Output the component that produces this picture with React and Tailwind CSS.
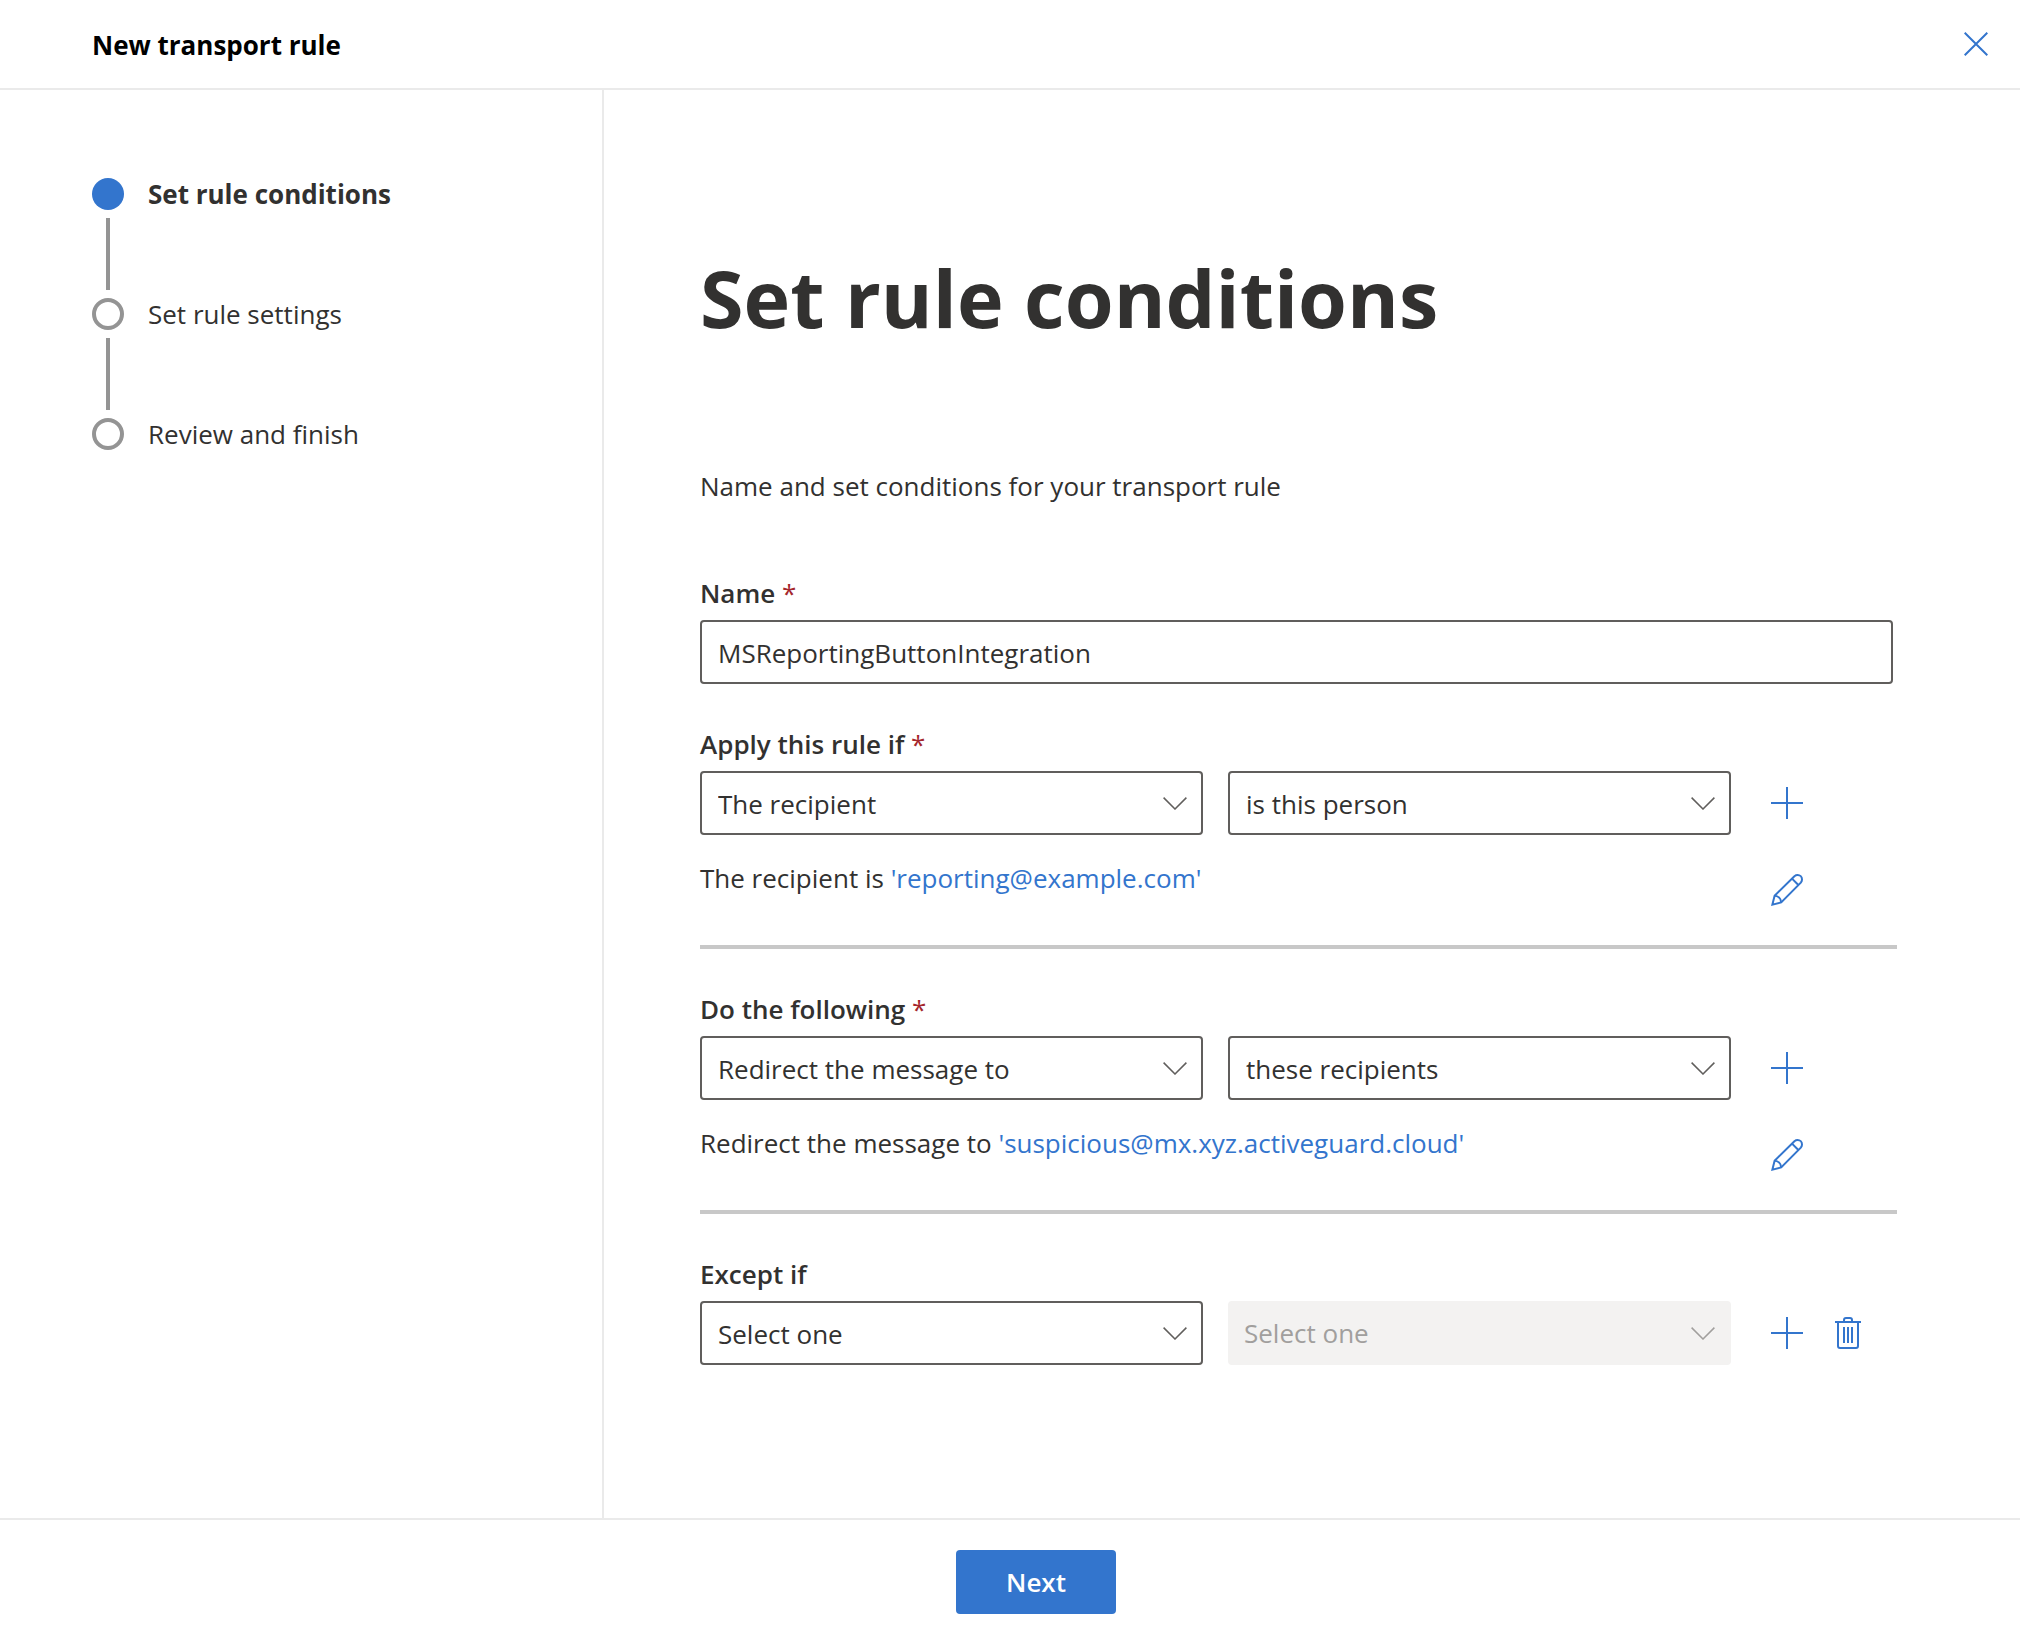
import React from "react";

const steps = [
  { label: "Set rule conditions", current: true },
  { label: "Set rule settings" },
  { label: "Review and finish" },
];

function PlusIcon() {
  return (
    <svg viewBox="0 0 32 32" className="size-8" fill="none" stroke="currentColor" strokeWidth="2" aria-hidden="true">
      <path d="M16 0v32M0 16h32" />
    </svg>
  );
}

function PencilIcon() {
  return (
    <svg viewBox="0 0 32 32" className="size-8" fill="none" stroke="currentColor" strokeWidth="2" aria-hidden="true">
      <path d="M1.4 30.6 3.6 21.8 23.4 2.2C24.4 1.4 25.4 1 26.6 1 29 1 31 3 31 5.4 31 6.6 30.6 7.6 29.8 8.6L10.2 28.4Z" />
      <path d="M21 4.600 27.400 11M3.600 21.800C7.200 22 10 24.800 10.200 28.400" />
    </svg>
  );
}

function TrashIcon() {
  return (
    <svg viewBox="0 0 26 32" className="h-8 w-[26px]" fill="none" stroke="currentColor" strokeWidth="2" aria-hidden="true">
      <path d="M0 5h26M9 5V3q0-2 2-2h4q2 0 2 2v2M3 5v24q0 2 2 2h16q2 0 2-2V5M9 10v16M13 10v16M17 10v16" />
    </svg>
  );
}

function Dropdown({ label, value, disabled }) {
  return (
    <div className="grid items-center">
      <select
        aria-label={label}
        disabled={disabled}
        className="col-start-1 row-start-1 h-16 w-full appearance-none rounded border-2 border-[#605e5c] bg-white pt-0.5 pr-16 pl-4 text-[#323130] opacity-100 disabled:border-[#f3f2f1] disabled:bg-[#f3f2f1] disabled:pt-0 disabled:pl-3.5 disabled:text-[#a19f9d]"
      >
        <option>{value}</option>
      </select>
      <svg
        viewBox="0 0 24 13"
        className={
          disabled
            ? "pointer-events-none col-start-1 row-start-1 mr-4 h-[13px] w-6 justify-self-end text-[#a19f9d]"
            : "pointer-events-none col-start-1 row-start-1 mr-4 h-[13px] w-6 justify-self-end text-[#605e5c]"
        }
        fill="none"
        stroke="currentColor"
        strokeWidth="1.5"
        aria-hidden="true"
      >
        <path d="M.6.600 12 12 23.400.600" />
      </svg>
    </div>
  );
}

function RuleGroup({ title, required, first, second, secondDisabled, removable, summary, link }) {
  return (
    <fieldset>
      <legend className="h-[46px] font-semibold">
        {title}
        {required && <span className="font-normal text-[#a4262c]"> *</span>}
      </legend>
      <div className="grid grid-cols-[503fr_503fr_137fr] items-center gap-x-[25px]">
        <Dropdown label={title} value={first} />
        <Dropdown label={title + " – detail"} value={second} disabled={secondDisabled} />
        <div className="flex items-center gap-8 pl-[15px] text-[#3375cd]">
          <button type="button" aria-label="Add"><PlusIcon /></button>
          {removable && <button type="button" aria-label="Delete"><TrashIcon /></button>}
        </div>
        {summary && (
          <>
            <p className="col-span-2 pt-6 pb-12">
              {summary} <a href="#edit" className="text-[#3375cd]">{link}</a>
            </p>
            <div className="pl-[15px] text-[#3375cd]">
              <button type="button" aria-label="Edit" className="block"><PencilIcon /></button>
            </div>
          </>
        )}
      </div>
      {summary && <hr className="-mr-1 border-t-4 border-[#c8c8c8]" />}
    </fieldset>
  );
}

export default function App() {
  return (
    <div className="flex min-h-screen flex-col bg-white font-['Open_Sans','Noto_Sans',sans-serif] text-[26px] leading-[38px] text-[#323130]">
      <header className="flex h-[90px] items-center justify-between border-b-2 border-[#eaeaea] pr-8 pl-[92px]">
        <h2 className="pt-0.5 font-bold text-black">New transport rule</h2>
        <button type="button" aria-label="Close" className="text-[#3375cd]">
          <svg viewBox="0 0 24 24" className="size-6" fill="none" stroke="currentColor" strokeWidth="2" aria-hidden="true">
            <path d="M.7.7 23.300 23.300M23.300.7.7 23.300" />
          </svg>
        </button>
      </header>

      <div className="flex grow">
        <nav className="w-[604px] shrink-0 border-r-2 border-[#eaeaea] pt-[88px] pl-[92px]">
          <ol>
            {steps.map((s, i) => (
              <li key={s.label} className="flex gap-6">
                <div className="flex flex-col items-center gap-2 pb-2">
                  <span className={s.current ? "size-8 rounded-full bg-[#3375cd]" : "size-8 rounded-full border-4 border-[#949494]"} />
                  {i < steps.length - 1 && <span className="h-[72px] w-1 bg-[#949494]" />}
                </div>
                <span className={s.current ? "h-8 leading-8 font-bold" : "h-8 leading-8"}>{s.label}</span>
              </li>
            ))}
          </ol>
        </nav>

        <main className="grow pt-[148px] pr-[127px] pl-24">
          <h1 className="text-[79px] leading-[120px] font-bold">Set rule conditions</h1>
          <p className="mt-[109px]">Name and set conditions for your transport rule</p>
          <form className="mt-[69px]">
            <label htmlFor="name" className="block h-[46px] font-semibold">
              Name<span className="font-normal text-[#a4262c]"> *</span>
            </label>
            <input
              id="name"
              defaultValue="MSReportingButtonIntegration"
              className="h-16 w-full rounded border-2 border-[#605e5c] px-4 pt-0.5 outline-none"
            />
            <div className="mt-[41px] flex flex-col gap-[41px]">
              <RuleGroup title="Apply this rule if" required first="The recipient" second="is this person" summary="The recipient is" link="'reporting@example.com'" />
              <RuleGroup title="Do the following" required first="Redirect the message to" second="these recipients" summary="Redirect the message to" link="'suspicious@mx.xyz.activeguard.cloud'" />
              <RuleGroup title="Except if" first="Select one" second="Select one" secondDisabled removable />
            </div>
          </form>
        </main>
      </div>

      <footer className="flex h-[126px] justify-center border-t-2 border-[#eaeaea] pt-[30px] pl-[52px]">
        <button type="button" className="h-16 w-40 rounded bg-[#3375cd] font-semibold text-white">Next</button>
      </footer>
    </div>
  );
}
